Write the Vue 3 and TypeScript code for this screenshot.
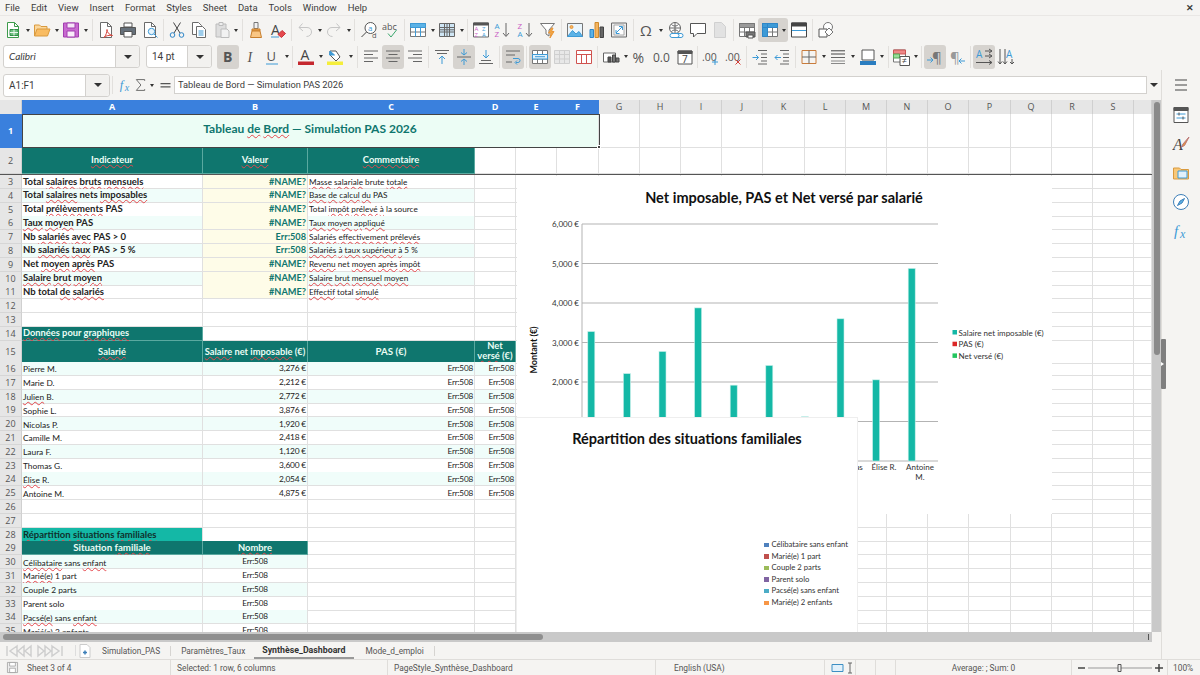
<script setup lang="ts">
import { h } from 'vue'

// --- icons: small shape lists, drawn on an 18x18 box ---
type Shape = { d?: string; s?: string; f?: string; t?: string; x?: number; y?: number; z?: number; b?: boolean; i?: boolean; font?: string }
const p = (d: string, s?: string, f?: string): Shape => ({ d, s, f })
const t = (text: string, x: number, y: number, z: number, f = '#444', b = false, i = false, font = 'Open Sans'): Shape => ({ t: text, x, y, z, f, b, i, font })
const circle = (x: number, y: number, r: number) => `M${x - r} ${y}a${r} ${r} 0 1 0 ${2 * r} 0a${r} ${r} 0 1 0 ${-2 * r} 0z`

const gray = '#6b6b6b'
const blue = '#3d9ad6'
const doc = (c = gray) => [p('M3.5 1.5h7l4 4v11h-11z', c, '#fff'), p('M10.5 1.5v4h4', c)]
const gridLines = 'M1.5 2.5h15v13h-15zM1.5 6.5h15M1.5 11h15M6.5 2.5v13M11.5 2.5v13'

const icons: Record<string, Shape[]> = {
  new: [...doc('#3d9b4b'), p('M6 8.5h8v6H6z', '#2f8f46', '#6fbf80'), p('M6 11.5h8M10 8.5v6', '#e9f6ec')],
  open: [p('M1.5 15V4h5l1.5 1.5h6V8', '#d99a3e', '#fbd79c'), p('M1.5 15L4 8h13l-2.5 7z', '#d99a3e', '#f9bc62')],
  save: [p('M1.5 2h15v14h-15z', '#a23fb0', '#c86ad0'), p('M5 2h8v5H5z', '#a23fb0', '#f6e6f8'), p('M5 10h8v6H5z', '#a23fb0', '#f9eefa')],
  pdf: [...doc(), p('M7 16.5c2-2 3-5.5 3-8 0 3 2 5 5.5 6-3.500-.5-6.500 0-8.500 2z', '#d6443c')],
  print: [p('M5 2h8v4H5z', '#555', '#fff'), p('M1.500 6.500h15v7h-15z', '#555', '#66707a'), p('M5 10.500h8v5.500H5z', '#555', '#fff')],
  preview: [...doc(), p(circle(10.5, 10.500, 3.200), blue, '#e6f3fb'), p('M13 13l3.500 3.500', blue)],
  cut: [p('M5.500 1.500l6.500 10.500M12.500 1.500L6 12', '#444'), p(circle(4.500, 14, 2.300), '#2e86c8'), p(circle(13.500, 14, 2.300), '#2e86c8')],
  copy: [p('M2.500 1.500h6l3 3v9h-9z', gray, '#fff'), p('M6.500 5.500h6l3 3v8h-9z', gray, '#fff'), p('M8.500 10h5M8.500 12h5M8.500 14h5', blue)],
  paste: [p('M3 3h10v13H3z', '#bcbcbc', '#dedede'), p('M6 1.500h4v3H6z', '#bcbcbc', '#eee'), p('M8 8h6l2 2v6.500H8z', '#bcbcbc', '#f2f2f2')],
  clone: [p('M7 1.500h4v6H7z', '#777', '#f1f1f1'), p('M5 8h8v2H5z', '#c77e2d', '#f0a850'), p('M5 10h8l1.500 6.500h-11z', '#c77e2d', '#f9c684')],
  clear: [t('A', 2, 13.500, 14, '#444'), p('M9 13.500l4-4 3.500 3-4 4z', '#c8343a', '#e5484d'), p('M2 16h8', blue)],
  undo: [p('M3 6.500l3.500-4M3 6.500l4 3.500M3 6.500h8c3 0 4.500 2 4.500 4.500s-2 4.500-5 4.500', '#c6c6c6')],
  redo: [p('M15 6.500l-3.500-4M15 6.500l-4 3.500M15 6.500H7c-3 0-4.500 2-4.500 4.500s2 4.500 5 4.500', '#c6c6c6')],
  find: [p(circle(10.500, 7, 5.500), '#555', '#fff'), p('M6.500 11l-5 5', '#444'), t('a', 8, 9.500, 8, '#3d9ad6'), t('d', 12, 17, 7.500, '#555')],
  spell: [t('abc', 0, 9, 9, '#555'), p('M6 12.500l3 3.500 5.500-7', '#3aa76d')],
  table: [p(gridLines, '#777', '#fff'), p('M1.500 2.500h15v4h-15z', blue, '#5bb2e6'), p('M6.500 6.500v9M11.500 6.500v9', blue)],
  rows: [p(gridLines, '#666', '#cfe6f5'), p('M1.500 8.800h15M9 2.500v13', '#666')],
  sort: [p('M1.500 2h15v14h-15z', gray, '#fff'), p('M1.500 2h15v2h-15z', '#555', '#555'), t('A', 2.500, 10, 6, '#c85bc4'), t('Z', 2.500, 15.500, 6, '#c85bc4'), t('Z', 10, 10, 6, blue), t('A', 10, 15.500, 6, blue)],
  asc: [t('A', 0.500, 8, 8, '#3d9ad6'), t('Z', 0.500, 16, 8, '#c85bc4'), p('M12 2v13M9 12l3 3.500 3-3.500', '#666')],
  desc: [t('Z', 0.500, 8, 8, '#c85bc4'), t('A', 0.500, 16, 8, '#3d9ad6'), p('M12 2v13M9 12l3 3.500 3-3.500', '#666')],
  filter: [p('M1.500 2.500h14l-5.500 6.500v6l-3-2V9z', '#777', '#fff'), p('M12.500 7l-3 5h2.500l-1 5 4-6.500h-2.500l1.500-3.500z', '#e8963a', '#f4a640')],
  image: [p('M1.500 2.500h15v13h-15z', '#777', '#eaf5fc'), p('M1.500 15.500l5-6 3.500 3.500 3-2.500 3.500 5z', blue, '#5bb2e6'), p(circle(5.500, 6, 1.500), '#e8963a', '#f4b460')],
  chart: [p('M2 8.500h3.500v8H2z', '#2e86c8', '#5bb2e6'), p('M7 1.500h3.500v15H7z', '#d08a2a', '#f4b460'), p('M12 6h3.500v10.500H12z', '#444', '#666')],
  pivot: [p('M1.500 2h15v14h-15z', gray, '#eee'), p('M4 4h10v10H4z', '#aaa', '#fff'), p('M6 12l6-6M9 5.500h3.500V9M6 9v3.500h3.500', blue)],
  omega: [t('Ω', 2, 15, 15, '#555')],
  link: [p(circle(8, 7, 5.500), '#666', '#fff'), p('M2.500 7h11M8 1.500v11M4.500 3.500c2 2 5 2 7 0M4.500 10.500c2-2 5-2 7 0', '#666'), p('M5 12.500h5a2 2 0 0 1 0 4H5a2 2 0 0 1 0-4zM10 12.500h4a2 2 0 0 1 0 4h-4', blue, '#fff')],
  comment: [p('M1.500 2.500h15v10H8l-3.500 3.500v-3.500h-3z', '#555', '#fff')],
  hf: [p('M3.500 1.500h7l4 4v11h-11z', '#d0d0d0', '#e2e2e2')],
  printarea: [p(gridLines, '#777', '#fff'), p('M1.500 2.500h15v4h-15z', '#777', '#9a9a9a'), p('M8 11h9v5H8z', '#555', '#777'), p('M10 14h5v3h-5z', '#555', '#fff')],
  freeze: [p(gridLines, '#777', '#fff'), p('M1.500 2.500h15v4h-15zM1.500 2.500h5v13h-5z', '#2e86c8', '#3d9ad6')],
  split: [p('M1.500 2h15v14h-15z', '#444', '#fff'), p('M1.500 2h15v3h-15z', '#444', '#444'), p('M2 9.500h14', blue)],
  shapes: [p(circle(11, 6, 4.500), '#777', '#fff'), p('M2 8h8v8H2z', '#555', '#fff'), p('M12 7l4 4-4 4-4-4z', '#777', '#fff')],
  bold: [t('B', 4, 14, 14, '#555', true)],
  italic: [t('I', 6.500, 14, 14, '#555', false, true, 'Liberation Serif')],
  underline: [t('U', 3.500, 13, 13, '#555'), p('M3 16h12', blue)],
  fcolor: [t('A', 3.500, 12, 14, '#444'), p('M1 13.500h16v3.500H1z', undefined, '#c5282f')],
  bcolor: [p('M4 3h6l4 6-4 4-6-6z', '#555', '#fff'), p('M4 3l-.5 4h5z', blue, blue), p('M1 13.500h16v3.500H1z', undefined, '#f5ee3b')],
  left: [p('M2 3h14M2 6.500h9M2 10h14M2 13.500h9', '#666')],
  center: [p('M2 3h14M4.500 6.500h9M2 10h14M4.500 13.500h9', '#666')],
  right: [p('M2 3h14M7 6.500h9M2 10h14M7 13.500h9', '#666')],
  vtop: [p('M2 2.500h14M4 5.500h10', '#666'), p('M9 16V8M6 11l3-3 3 3', blue)],
  vmid: [p('M2 9h14', '#666'), p('M9 1v6M6 4.500L9 7l3-2.500M9 17v-6M6 13.500L9 11l3 2.500', blue)],
  vbot: [p('M2 15.500h14M4 12.500h10', '#666'), p('M9 2v8M6 7l3 3 3-3', blue)],
  wrap: [p('M2 3h14M2 7h9M2 14h6', '#666'), p('M9 10.500h5a2 2 0 0 1 0 4h-2M13 12.500l-2 2 2 2', blue)],
  merge: [p(gridLines, '#777', '#fff'), p('M1.500 6.500h15V11h-15z', blue, '#e2f1fb'), p('M4 8.700h10', blue)],
  mergec: [p(gridLines, '#cfcfcf', '#e8e8e8')],
  unmerge: [p('M1.500 2.500h15v13h-15zM1.500 6.500h15M6.500 6.500v9M11.500 6.500v9', '#d0524f', '#fff')],
  currency: [p('M1.500 5h12v9h-12z', '#666', '#fff'), p('M6 9h3v5H6z', '#444', '#555'), p('M10.500 7h3v7h-3zM14 10h3v4h-3z', '#444', '#777')],
  percent: [t('%', 1.500, 14.500, 14, '#555')],
  number: [t('0.0', 0, 14, 12, '#555')],
  date: [p('M2 3h14v13H2z', '#555', '#fff'), p('M2 3h14v2.500H2z', '#555', '#555'), t('7', 6, 14.500, 10, '#444')],
  adddec: [t('.00', 0, 12.500, 10.500, '#555'), p('M13 11v6M10 14h6', blue)],
  deldec: [t('.00', 0, 12.500, 10.500, '#555'), p('M10.500 11.500l5 5M15.500 11.500l-5 5', '#d6443c')],
  indent: [p('M7 2.500h9M10 6h6M10 9.500h6M10 13h6M7 16h9', '#666'), p('M1.500 9.500h6M5 7l2.500 2.500L5 12', blue)],
  outdent: [p('M7 2.500h9M10 6h6M10 9.500h6M10 13h6M7 16h9', '#666'), p('M8 9.500H2M4.500 7L2 9.500 4.500 12', blue)],
  borders: [p('M2 2.500h14v13H2z', '#c97c3c'), p('M9 2.500v13M2 9h14', '#666')],
  bstyle: [p('M2 2.800h14', '#444'), p('M2 6h14', '#444'), p('M2 9.500h14', '#666'), p('M2 13h14M2 15.500h14', '#888')],
  bcol: [p('M3 2h12v10H3z', '#555', '#fff'), p('M1 13h16v4H1z', undefined, '#2a7dc0')],
  cond: [p('M1.500 2h12v12h-12z', '#777', '#fff'), p('M1.500 2h12v4h-12z', '#c55', '#e88'), p('M1.500 6h6v4h-6z', '#5a5', '#9d9'), p('M8 8.500h9.500v9H8z', '#555', '#fff'), t('≠', 9.500, 16, 9, '#444')],
  ltr: [t('¶', 6, 15, 15, '#777'), p('M1 12h6M4.500 9.500L7 12l-2.500 2.500', blue)],
  rtl: [t('¶', 2, 15, 15, '#999'), p('M17 13h-6M13.500 10.500L11 13l2.500 2.500', blue)],
  htext: [t('A', 1, 10, 10, '#3d9ad6'), p('M10 3h7M14 1l3 2-3 2M10 8h7M14 6l3 2-3 2M1 14.500h16M14 12.500l3 2-3 2', '#555')],
  vtext: [p('M3 1v15M1 13.500L3 16l2-2.500M8 1v15M6 13.500L8 16l2-2.500', '#555'), t('A', 9, 10, 10, '#3d9ad6'), p('M15 11v5M13 14l2 2 2-2', '#555')],
  menu: [p('M3 4h12M3 9h12M3 14h12', '#444')],
  props: [p('M2 1.500h14v15H2z', '#555', '#fff'), p('M2 1.500h14v3H2z', '#555', '#555'), p('M4.500 8h9M4.500 12h9', blue), p('M7 6.500v3M11 10.500v3', '#555')],
  styles: [t('A', 1, 15, 16, '#444', false, true, 'Liberation Serif'), p('M17 2l-6 7-1.500 3 3-1.500z', '#b77', '#e8963a')],
  gallery: [p('M1.500 4h6l1.500 1.500h7.500V15h-15z', '#d99a3e', '#f9c878'), p('M6 7h9v7H6z', blue, '#e2f1fb')],
  nav: [p(circle(9, 9, 7.500), '#3d7fb8', '#fff'), p('M12.500 5.500L10 10l-4.500 2.500L8 8z', '#3d7fb8', '#5bb2e6')],
  fx: [t('f', 2, 14, 15, '#3d9ad6', false, true, 'Liberation Serif'), t('x', 8, 16, 12, '#3d9ad6', false, true, 'Liberation Serif')],
  sum: [p('M14 4V2.500H4L9.500 9 4 15.500h10V14', '#555')],
  eq: [p('M3 6.500h12v1.500H3zM3 10.500h12V12H3z', undefined, '#555')],
  statsave: [p('M2 2h14v14H2z', '#999', '#eee'), p('M5 2h8v5H5zM5 10h8v6H5z', '#999', '#fff')],
}

// functional icon: same svg everywhere, only the shape list changes
const Icon = (props: { name: string; size?: number }) => {
  const size = props.size ?? 18
  return h('svg', { width: size, height: size, viewBox: '0 0 18 18', style: 'display:block' },
    (icons[props.name] || []).map((s) => s.t
      ? h('text', { x: s.x, y: s.y, 'font-size': s.z, fill: s.f, 'font-family': s.font, 'font-weight': s.b ? 700 : 400, 'font-style': s.i ? 'italic' : 'normal' }, s.t)
      : h('path', { d: s.d, stroke: s.s || 'none', fill: s.f || 'none', 'stroke-width': 1 })))
}
Icon.props = ['name', 'size']

// --- toolbars ---
type Item = { k: 'b' | 'd' | 's'; i?: string; on?: boolean; wide?: boolean }
const b = (i: string, on = false): Item => ({ k: 'b', i, on })
const d = (on = false, wide = false): Item => ({ k: 'd', on, wide })
const s: Item = { k: 's' }

const menus = ['File', 'Edit', 'View', 'Insert', 'Format', 'Styles', 'Sheet', 'Data', 'Tools', 'Window', 'Help']

const toolbar1: Item[] = [
  b('new'), d(), b('open'), d(), b('save'), d(), s,
  b('pdf'), b('print'), b('preview'), s,
  b('cut'), b('copy'), b('paste'), d(), s,
  b('clone'), b('clear'), s,
  b('undo'), d(), b('redo'), d(), s,
  b('find'), b('spell'), s,
  b('table'), d(), b('rows'), d(), s,
  b('sort'), b('asc'), b('desc'), b('filter'), s,
  b('image'), b('chart'), b('pivot'), s,
  b('omega'), d(), b('link'), b('comment'), b('hf'), s,
  b('printarea'), b('freeze', true), d(true), b('split'), s,
  b('shapes'),
]

const toolbar2: Item[] = [
  b('bold', true), b('italic'), b('underline'), d(), s,
  b('fcolor'), d(), b('bcolor'), d(false, true), s,
  b('left'), b('center', true), b('right'), s,
  b('vtop'), b('vmid', true), b('vbot'), s,
  b('wrap', true), s, b('merge', true), b('mergec'), b('unmerge'), s,
  b('currency'), d(), b('percent'), b('number'), b('date'), s,
  b('adddec'), b('deldec'), s,
  b('indent'), b('outdent'), s,
  b('borders'), d(), b('bstyle'), d(), b('bcol'), d(), s,
  b('cond'), d(), s,
  b('ltr', true), b('rtl'), s,
  b('htext', true), b('vtext'),
]

const sideIcons = ['props', 'styles', 'gallery', 'nav', 'fx']

// --- sheet ---
type Cell = { text?: string; cls?: string; span?: number }
type Row = { num: number; cls: string; head?: string; cells: Cell[] }

const columnNames = 'ABCDEFGHIJKLMNOPQRST'.split('')
const totalCols = 20

function makeRow(num: number, cells: Cell[], cls = '', head = ''): Row {
  const used = cells.reduce((n, c) => n + (c.span ?? 1), 0)
  const rest: Cell[] = []
  for (let i = used; i < totalCols; i++) rest.push({})
  return { num, cls, head, cells: [...cells, ...rest] }
}

// words between ~ get the spell-check squiggle
function parts(text: string) {
  return text.split('~').map((txt, i) => ({ txt, bad: i % 2 === 1 }))
}

const kpis: [string, string, string][] = [
  ['Total ~salaires~ ~bruts~ ~mensuels~', '#NAME?', '~Masse~ ~salariale~ brute ~totale~'],
  ['Total ~salaires~ nets ~imposables~', '#NAME?', '~Base~ ~de~ ~calcul~ ~du~ PAS'],
  ['Total ~prélèvements~ PAS', '#NAME?', 'Total ~impôt~ ~prélevé~ ~à~ la source'],
  ['~Taux~ ~moyen~ PAS', '#NAME?', '~Taux~ ~moyen~ ~appliqué~'],
  ['Nb ~salariés~ ~avec~ PAS > 0', 'Err:508', '~Salariés~ ~effectivement~ ~prélevés~'],
  ['Nb ~salariés~ ~taux~ PAS > 5 %', 'Err:508', '~Salariés~ ~à~ ~taux~ ~supérieur~ ~à~ 5 %'],
  ['Net ~moyen~ ~après~ PAS', '#NAME?', '~Revenu~ net ~moyen~ ~après~ ~impôt~'],
  ['~Salaire~ ~brut~ ~moyen~', '#NAME?', '~Salaire~ ~brut~ ~mensuel~ ~moyen~'],
  ['Nb total ~de~ ~salariés~', '#NAME?', '~Effectif~ total ~simulé~'],
]

const salaries: [string, string, number][] = [
  ['Pierre M.', '3,276 €', 3276], ['Marie D.', '2,212 €', 2212], ['~Julien~ B.', '2,772 €', 2772],
  ['Sophie L.', '3,876 €', 3876], ['Nicolas P.', '1,920 €', 1920], ['Camille M.', '2,418 €', 2418],
  ['Laura F.', '1,120 €', 1120], ['Thomas G.', '3,600 €', 3600], ['~Élise~ R.', '2,054 €', 2054],
  ['Antoine M.', '4,875 €', 4875],
]

const families = ['~Célibataire~ sans ~enfant~', '~Marié(e)~ 1 part', 'Couple 2 parts', 'Parent solo', '~Pacsé(e)~ sans ~enfant~', '~Marié(e)~ 2 enfants']

const rows: Row[] = [
  makeRow(1, [{ text: 'Tableau ~de~ ~Bord~ — Simulation PAS 2026', cls: 'title', span: 6 }], 'r1', 'sel'),
  makeRow(2, [
    { text: '~Indicateur~', cls: 'teal' }, { text: '~Valeur~', cls: 'teal' }, { text: '~Commentaire~', cls: 'teal' },
  ], 'r2'),
]
kpis.forEach((k, i) => {
  const m = i % 2 === 1 ? ' mint' : ''
  rows.push(makeRow(i + 3, [
    { text: k[0], cls: 'label' + m }, { text: k[1], cls: 'value' }, { text: k[2], cls: 'note' + m },
  ]))
})
rows.push(makeRow(12, []), makeRow(13, []))
rows.push(makeRow(14, [{ text: '~Données~ pour ~graphiques~', cls: 'teal sect' }]))
rows.push(makeRow(15, [
  { text: '~Salarié~', cls: 'teal' }, { text: '~Salaire~ net ~imposable~ (€)', cls: 'teal tight' },
  { text: 'PAS (€)', cls: 'teal big' }, { text: 'Net ~versé~ (€)', cls: 'teal wrapped' },
], 'r15'))
salaries.forEach((e, i) => {
  const m = i % 2 === 0 ? ' mint' : ''
  rows.push(makeRow(i + 16, [
    { text: e[0], cls: 'plain' + m }, { text: e[1], cls: 'num' + m },
    { text: 'Err:508', cls: 'num small' + m }, { text: 'Err:508', cls: 'num small' + m },
  ]))
})
rows.push(makeRow(26, []), makeRow(27, []))
rows.push(makeRow(28, [{ text: '~Répartition~ ~situations~ ~familiales~', cls: 'aqua' }]))
rows.push(makeRow(29, [{ text: 'Situation ~familiale~', cls: 'teal big' }, { text: '~Nombre~', cls: 'teal' }]))
families.forEach((f, i) => {
  const m = i % 2 === 0 ? ' mint' : ''
  rows.push(makeRow(i + 30, [{ text: f, cls: 'plain' + m }, { text: 'Err:508', cls: 'mid' + m }]))
})

// --- first chart: screen coordinates through the viewBox ---
const yTicks = [0, 1000, 2000, 3000, 4000, 5000, 6000]
const zeroY = 461
const perEuro = 0.03950
const yOf = (v: number) => zeroY - v * perEuro
const bars = salaries.map((e, i) => ({ x: 591.3 + i * 35.6 - 3.5, y: yOf(e[2]), h: e[2] * perEuro }))
const xLabels: [string, string, number][] = [
  ['Thomas', 'G.', 849], ['Élise R.', '', 884], ['Antoine', 'M.', 920],
]
const legend1 = [
  { c: '#14b8a6', t: 'Salaire net imposable (€)' },
  { c: '#dc2626', t: 'PAS (€)' },
  { c: '#22c55e', t: 'Net versé (€)' },
]
const legend2 = [
  { c: '#4f81bd', t: 'Célibataire sans enfant' },
  { c: '#c0504d', t: 'Marié(e) 1 part' },
  { c: '#9bbb59', t: 'Couple 2 parts' },
  { c: '#8064a2', t: 'Parent solo' },
  { c: '#4bacc6', t: 'Pacsé(e) sans enfant' },
  { c: '#f79646', t: 'Marié(e) 2 enfants' },
]

const sheetTabs = [
  { t: 'Simulation_PAS', on: false },
  { t: 'Paramètres_Taux', on: false },
  { t: 'Synthèse_Dashboard', on: true },
  { t: 'Mode_d_emploi', on: false },
]
</script>

<template>
  <div class="app">
    <div class="menubar">
      <span v-for="m in menus" :key="m" class="menu-item">{{ m }}</span>
      <span class="close-x">✕</span>
    </div>

    <div class="toolbar tb1">
      <template v-for="(it, i) in toolbar1" :key="i">
        <span v-if="it.k === 's'" class="sep"></span>
        <span v-else-if="it.k === 'd'" class="dd" :class="{ on: it.on }"><i class="caret"></i></span>
        <span v-else class="btn" :class="{ on: it.on, joined: it.on && toolbar1[i + 1]?.k === 'd' }"><Icon :name="it.i!" /></span>
      </template>
    </div>

    <div class="toolbar tb2">
      <div class="combo font-combo"><span class="combo-text font-name">Calibri</span><span class="combo-arrow"><i class="caret big"></i></span></div>
      <div class="combo size-combo"><span class="combo-text">14 pt</span><span class="combo-arrow"><i class="caret big"></i></span></div>
      <template v-for="(it, i) in toolbar2" :key="i">
        <span v-if="it.k === 's'" class="sep"></span>
        <span v-else-if="it.k === 'd'" class="dd" :class="{ wide: it.wide }"><i class="caret"></i></span>
        <span v-else class="btn" :class="{ on: it.on }"><Icon :name="it.i!" /></span>
      </template>
    </div>

    <div class="work">
      <div class="work-main">
        <div class="formula">
          <div class="combo name-combo"><span class="combo-text">A1:F1</span><span class="combo-arrow"><i class="caret big"></i></span></div>
          <span class="sep short"></span>
          <span class="fbtn fx-btn"><Icon name="fx" /></span>
          <span class="fbtn"><Icon name="sum" /></span>
          <span class="dd"><i class="caret"></i></span>
          <span class="fbtn eq-btn"><Icon name="eq" /></span>
          <div class="formula-input">Tableau de Bord — Simulation PAS 2026</div>
          <span class="formula-dd"><i class="caret big"></i></span>
        </div>

        <div class="sheet-wrap">
          <div class="sheet">
            <div class="grid-row col-head">
              <div class="corner"></div>
              <div v-for="(c, i) in columnNames" :key="c" class="col-name" :class="{ sel: i < 6 }">{{ i < 19 ? c : '' }}</div>
            </div>
            <div v-for="r in rows" :key="r.num" class="grid-row" :class="r.cls">
              <div class="row-name" :class="r.head">{{ r.num }}</div>
              <div
                v-for="(c, j) in r.cells"
                :key="j"
                class="cell"
                :class="c.cls"
                :style="c.span ? { gridColumn: 'span ' + c.span } : undefined"
              >
                <span v-if="c.text" class="cell-text"><template v-for="(part, n) in parts(c.text)" :key="n"><span :class="{ bad: part.bad }">{{ part.txt }}</span></template></span>
              </div>
            </div>

            <div class="selection"><i class="sel-handle"></i></div>

            <div class="chart chart-one">
              <svg class="chart-svg" width="535" height="338" viewBox="517 176 535 338">
                <text x="784" y="203" text-anchor="middle" class="chart-title">Net imposable, PAS et Net versé par salarié</text>
                <line v-for="v in yTicks" :key="v" x1="582" x2="938" :y1="yOf(v)" :y2="yOf(v)" stroke="#b3b3b3" stroke-width="1" />
                <line x1="582" x2="582" :y1="yOf(6000)" :y2="yOf(0)" stroke="#b3b3b3" stroke-width="1" />
                <text v-for="v in yTicks" :key="'t' + v" x="579" :y="yOf(v) + 3" text-anchor="end" class="axis-text">{{ v === 0 ? '0 €' : v.toLocaleString('en-US') + ' €' }}</text>
                <rect v-for="(bar, i) in bars" :key="'b' + i" :x="bar.x" :y="bar.y" width="7" :height="bar.h" fill="#14b8a6" stroke="#c4efe9" stroke-width="0.6" />
                <text class="axis-title" transform="translate(537 350) rotate(-90)" text-anchor="middle">Montant (€)</text>
                <template v-for="l in xLabels" :key="l[0]">
                  <text :x="l[2]" y="470" text-anchor="middle" class="axis-text">{{ l[0] }}</text>
                  <text v-if="l[1]" :x="l[2]" y="480" text-anchor="middle" class="axis-text">{{ l[1] }}</text>
                </template>
                <template v-for="(l, i) in legend1" :key="l.t">
                  <rect x="952.500" :y="330 + i * 11.700" width="4.500" height="4.500" :fill="l.c" />
                  <text x="958.500" :y="335.500 + i * 11.700" class="axis-text">{{ l.t }}</text>
                </template>
              </svg>
            </div>

            <div class="chart chart-two">
              <div class="pie-title">Répartition des situations familiales</div>
              <ul class="pie-legend">
                <li v-for="l in legend2" :key="l.t"><i class="swatch" :style="{ background: l.c }"></i>{{ l.t }}</li>
              </ul>
            </div>
          </div>

          <div class="vscroll"><i class="vthumb"></i></div>
        </div>

        <div class="hscroll"><i class="hthumb"></i><i class="hmark"></i></div>

        <div class="tabs">
          <div class="tab-nav">
            <svg width="62" height="14" viewBox="0 0 62 14">
              <path d="M2 2v10M12 2L5 7l7 5zM19 2l-6 5 6 5zM26 2l-6 5 6 5zM33 2l6 5-6 5zM40 2l6 5-6 5zM47 2l7 5-7 5zM57 2v10" stroke="#cfcfcf" fill="none" stroke-width="1.500" />
            </svg>
          </div>
          <span class="tab-sep"></span>
          <svg class="tab-new" width="14" height="16" viewBox="0 0 14 16">
            <path d="M2 1.500h7l3 3v10H2z" stroke="#ccc" fill="#fff" />
            <path d="M7 7.500v4M5 9.500h4" stroke="#3d7fb8" stroke-width="1.500" />
          </svg>
          <template v-for="tab in sheetTabs" :key="tab.t">
            <span class="tab" :class="{ active: tab.on }">{{ tab.t }}</span>
            <span v-if="!tab.on && tab.t !== 'Paramètres_Taux'" class="tab-line"></span>
          </template>
        </div>
      </div>

      <aside class="sidebar">
        <span class="side-btn first"><Icon name="menu" /></span>
        <span v-for="n in sideIcons" :key="n" class="side-btn"><Icon :name="n" /></span>
      </aside>
      <div class="side-handle"><i></i></div>
    </div>

    <div class="status">
      <span class="st st-save"><Icon name="statsave" :size="13" /></span>
      <span class="st st-sheet">Sheet 3 of 4</span>
      <span class="st st-selected">Selected: 1 row, 6 columns</span>
      <span class="st st-page">PageStyle_Synthèse_Dashboard</span>
      <span class="st st-lang">English (USA)</span>
      <span class="st st-mode">
        <svg width="24" height="12" viewBox="0 0 24 12">
          <path d="M1 2.500h11v7H1z" stroke="#3d8fc4" fill="#e2f1fb" />
          <path d="M17 1h4M19 1v10M17 11h4" stroke="#666" fill="none" />
        </svg>
      </span>
      <span class="st st-blank"></span>
      <span class="st st-blank"></span>
      <span class="st st-sum">Average: ; Sum: 0</span>
      <span class="st st-zoom">
        <svg width="88" height="12" viewBox="0 0 88 12">
          <path d="M0 6h7M77 6h8M81 2v8" stroke="#444" stroke-width="1.500" fill="none" />
          <path d="M10 6h64" stroke="#999" fill="none" />
          <path d="M40 2.500h3v7h-3z" stroke="#555" fill="#eee" />
        </svg>
      </span>
      <span class="st st-pct">100%</span>
    </div>
  </div>
</template>

<style scoped>
.app {
  width: 1200px;
  height: 675px;
  display: flex;
  flex-direction: column;
  overflow: hidden;
  background: #f5f4f2;
  font-family: Roboto, "Open Sans", sans-serif;
  color: #3c3c3c;
}

.menubar {
  height: 16px;
  display: flex;
  align-items: center;
  font-size: 9.500px;
  padding-left: 5px;
  gap: 11px;
  border-bottom: 1px solid #e9e7e5;
  box-sizing: border-box;
  flex: none;
}

.close-x {
  margin-left: auto;
  margin-right: 6px;
  font-size: 9px;
  font-weight: 700;
}

.toolbar {
  display: flex;
  align-items: center;
  flex: none;
}

.tb1 {
  height: 28px;
  padding-left: 2px;
}

.tb2 {
  height: 26px;
  padding-left: 3px;
  padding-bottom: 1px;
  box-sizing: border-box;
}

.btn {
  width: 22.200px;
  height: 24px;
  flex: none;
  display: flex;
  align-items: center;
  justify-content: center;
  border-radius: 3px;
}

.btn.on {
  background: #d6d3cf;
}

.btn.joined {
  border-radius: 3px 0 0 3px;
}

.dd {
  width: 7px;
  height: 24px;
  flex: none;
  display: flex;
  align-items: center;
  justify-content: center;
}

.dd.wide {
  width: 8.500px;
}

.dd.on {
  background: #d6d3cf;
  border-radius: 0 3px 3px 0;
}

.caret {
  display: block;
  width: 0;
  height: 0;
  border-left: 2.500px solid transparent;
  border-right: 2.500px solid transparent;
  border-top: 3px solid #333;
}

.caret.big {
  border-left-width: 4px;
  border-right-width: 4px;
  border-top-width: 4px;
}

.sep {
  width: 1px;
  height: 22px;
  flex: none;
  background: #e2e0dd;
  margin: 0 2px;
}

.tb2 .sep {
  margin: 0 1.800px;
}

.sep.short {
  height: 18px;
}

.combo {
  height: 23px;
  box-sizing: border-box;
  flex: none;
  display: flex;
  background: #fff;
  border: 1px solid #d3d1ce;
  border-radius: 3px;
  font-size: 10px;
}

.combo-text {
  flex: 1;
  padding-left: 5px;
  line-height: 21px;
}

.font-name {
  font-family: Lato, sans-serif;
  font-style: italic;
}

.combo-arrow {
  width: 23px;
  background: #f2f1ef;
  border-left: 1px solid #d3d1ce;
  border-radius: 0 3px 3px 0;
  display: flex;
  align-items: center;
  justify-content: center;
}

.font-combo {
  width: 137px;
}

.size-combo {
  width: 66px;
  margin: 0 5px 0 6px;
}

.name-combo {
  width: 107px;
}

.work {
  flex: 1;
  min-height: 0;
  display: flex;
  position: relative;
}

.work-main {
  width: 1162px;
  flex: none;
  display: flex;
  flex-direction: column;
  border-right: 1px solid #dfddda;
  box-sizing: border-box;
  min-height: 0;
}

.formula {
  height: 30px;
  flex: none;
  display: flex;
  align-items: center;
  padding-left: 3px;
  box-sizing: border-box;
}

.fbtn {
  width: 15px;
  height: 18px;
  flex: none;
  display: flex;
  justify-content: center;
}

.fx-btn,
.eq-btn {
  margin-left: 3px;
}

.formula-input {
  width: 973px;
  height: 18px;
  margin-left: 1px;
  box-sizing: border-box;
  background: #fff;
  border: 1px solid #d3d1ce;
  font-size: 9.300px;
  line-height: 16px;
  padding-left: 3px;
  flex: none;
}

.formula-dd {
  width: 12px;
  display: flex;
  justify-content: center;
  margin-left: 1px;
}

.sheet-wrap {
  height: 532px;
  flex: none;
  display: flex;
  overflow: hidden;
}

.sheet {
  width: 1152px;
  flex: none;
  position: relative;
  overflow: hidden;
  background: #fff;
  font-family: Lato, sans-serif;
}

.grid-row {
  display: grid;
  grid-template-columns: 22px 181px 105px 167px 41px 41px 42px 41px 41px 41px 41px 42px 41px 41px 41px 41px 42px 41px 41px 41px 18px;
  height: 13.800px;
}

.col-head {
  height: 14px;
}

.corner,
.col-name {
  background: #e6e6e6;
  border-right: 1px solid #d0d0d0;
  box-sizing: border-box;
}

.col-name {
  font-family: "Open Sans", sans-serif;
  font-size: 9px;
  line-height: 14px;
  text-align: center;
  color: #555;
}

.col-name.sel {
  background: #3a80dd;
  color: #fff;
  font-weight: 700;
  border-right-color: #3a80dd;
}

.row-name {
  font-family: "Open Sans", sans-serif;
  font-size: 9px;
  background: #e6e6e6;
  color: #555;
  display: flex;
  align-items: center;
  justify-content: center;
  border-bottom: 1px solid #d6d6d6;
  border-right: 1px solid #d0d0d0;
  box-sizing: border-box;
}

.row-name.sel {
  background: #3a80dd;
  color: #fff;
  font-weight: 700;
  border-color: #3a80dd;
}

.r1 {
  height: 33.500px;
}

.r2 {
  height: 27.500px;
  border-bottom: 1px solid #555;
  box-sizing: border-box;
}

.r15 {
  height: 21.400px;
}

.cell {
  border-right: 1px solid #e0e0e0;
  border-bottom: 1px solid #e0e0e0;
  box-sizing: border-box;
  min-width: 0;
  font-size: 9.500px;
  color: #222;
  white-space: nowrap;
  display: flex;
  align-items: center;
  padding: 0 1px;
}

.cell-text {
  display: block;
}

.bad {
  text-decoration: underline wavy #e5484d 1px;
  text-underline-offset: 0.500px;
}

.title {
  background: #ecfdf5;
  color: #0f766e;
  font-weight: 700;
  font-size: 12px;
  justify-content: center;
  padding-bottom: 3px;
}

.teal {
  background: #0f766e;
  color: #ecfdf5;
  font-weight: 700;
  justify-content: center;
  border-color: #5aa9a0;
  font-size: 9.400px;
  padding-bottom: 1px;
}

.teal.tight {
  font-size: 9.300px;
  padding: 0;
}

.teal.sect {
  justify-content: flex-start;
  font-size: 9.300px;
}

.teal.big {
  font-size: 9.700px;
}

.teal.wrapped {
  white-space: normal;
  text-align: center;
  line-height: 10.500px;
}

.label {
  font-weight: 700;
  padding-bottom: 1px;
}

.value {
  background: #fefce8;
  color: #0f766e;
  font-weight: 700;
  font-size: 9.200px;
  justify-content: flex-end;
  padding-bottom: 1px;
}

.note {
  font-size: 8.200px;
}

.mint {
  background: #f0fdfa;
}

.plain {
  padding-top: 2px;
  font-size: 8.400px;
}

.num {
  justify-content: flex-end;
  font-size: 8.400px;
  letter-spacing: -0.200px;
}

.num.small {
  font-size: 8.200px;
}

.mid {
  justify-content: center;
  font-size: 8.200px;
  letter-spacing: -0.200px;
  padding-bottom: 1px;
}

.aqua {
  background: #14b8a6;
  color: #10302c;
  font-weight: 700;
  font-size: 9.500px;
}

.selection {
  position: absolute;
  left: 22px;
  top: 14px;
  width: 577.500px;
  height: 33.500px;
  border: 1px solid #444;
  box-sizing: border-box;
  pointer-events: none;
}

.sel-handle {
  position: absolute;
  right: -2.500px;
  bottom: -2.500px;
  width: 4px;
  height: 4px;
  background: #444;
  border: 1px solid #fff;
  box-sizing: border-box;
}

.chart {
  position: absolute;
  background: #fff;
}

.chart-one {
  left: 517px;
  top: 76px;
  width: 535px;
  height: 338px;
}

.chart-svg {
  display: block;
  font-family: Lato, sans-serif;
}

.chart-title {
  font-size: 14.500px;
  font-weight: 700;
  fill: #111;
}

.axis-text {
  font-size: 8px;
  fill: #333;
}

.axis-title {
  font-size: 9px;
  font-weight: 700;
  fill: #111;
}

.chart-two {
  left: 517px;
  top: 318px;
  width: 340px;
  height: 216px;
  box-shadow: 0 0 0 1px #eeeeee;
  display: flex;
  flex-direction: column;
}

.pie-title {
  margin-top: 12px;
  height: 18px;
  text-align: center;
  font-size: 14.500px;
  font-weight: 700;
  line-height: 18px;
  color: #111;
}

.pie-legend {
  list-style: none;
  margin: 91px 0 0 247px;
  padding: 0;
  font-size: 7.700px;
  color: #333;
}

.pie-legend li {
  height: 11.600px;
  line-height: 11.600px;
  display: flex;
  align-items: center;
  white-space: nowrap;
}

.swatch {
  width: 4.500px;
  height: 4.500px;
  margin-right: 3px;
  flex: none;
}

.vscroll {
  width: 9px;
  flex: none;
  background: #c9c9c9;
  display: flex;
  justify-content: center;
}

.vthumb {
  display: block;
  width: 6px;
  height: 253px;
  margin-top: 2px;
  background: #8a8a8a;
  border-radius: 3px;
}

.hscroll {
  height: 10px;
  flex: none;
  background: #c9c9c9;
  display: flex;
  align-items: center;
  padding-left: 3px;
  width: 1152px;
  box-sizing: border-box;
}

.hthumb {
  display: block;
  width: 540px;
  height: 6px;
  background: #8f8f8f;
  border-radius: 3px;
}

.hmark {
  display: block;
  width: 1px;
  height: 6px;
  margin-left: auto;
  margin-right: 3px;
  background: #555;
}

.tabs {
  height: 17px;
  flex: none;
  display: flex;
  align-items: center;
  font-size: 8.300px;
  color: #555;
}

.tab-nav {
  margin-left: 5px;
  width: 62px;
  flex: none;
  height: 14px;
}

.tab-sep {
  width: 1px;
  height: 11px;
  background: #ddd;
  margin-left: 8px;
}

.tab-new {
  margin-left: 2px;
  flex: none;
}

.tab {
  height: 100%;
  display: flex;
  align-items: center;
  padding: 0 10px;
  box-sizing: border-box;
}

.tab.active {
  font-weight: 700;
  font-size: 8.800px;
  color: #333;
  border-bottom: 2px solid #999;
  padding: 1px 9px 0 8px;
  margin: 0 1px 0 -1px;
}

.tab-line {
  width: 1px;
  height: 10px;
  background: #d6d4d1;
}

.sidebar {
  flex: 1;
  display: flex;
  flex-direction: column;
  align-items: center;
}

.side-btn {
  height: 29px;
  display: flex;
  align-items: center;
  justify-content: center;
}

.side-btn.first {
  height: 30px;
}

.side-handle {
  position: absolute;
  left: 1161px;
  top: 269px;
  width: 5px;
  height: 50px;
  background: #7f7f7f;
  border-radius: 1px;
  display: flex;
  align-items: center;
}

.side-handle i {
  display: block;
  width: 0;
  height: 0;
  border-left: 3px solid #fff;
  border-top: 2.500px solid transparent;
  border-bottom: 2.500px solid transparent;
}

.status {
  height: 16px;
  flex: none;
  display: flex;
  align-items: center;
  font-size: 8.350px;
  color: #555;
  border-top: 1px solid #dfddda;
  box-sizing: border-box;
}

.st {
  flex: none;
  height: 100%;
  display: flex;
  align-items: center;
  border-right: 1px solid #dfddda;
  box-sizing: border-box;
  white-space: nowrap;
  padding-left: 6px;
}

.st-save {
  width: 21px;
  border-right: 0;
}

.st-sheet {
  width: 150px;
}

.st-selected {
  width: 217px;
}

.st-page {
  width: 268px;
}

.st-lang {
  width: 169px;
  padding-left: 18px;
}

.st-mode {
  width: 31px;
}

.st-blank {
  width: 20px;
}

.st-sum {
  width: 176px;
  justify-content: center;
  padding: 0;
}

.st-zoom {
  width: 96px;
}

.st-pct {
  border-right: 0;
  padding-left: 5px;
}
</style>

<style>
html, body {
  margin: 0;
  overflow: hidden;
}
</style>
